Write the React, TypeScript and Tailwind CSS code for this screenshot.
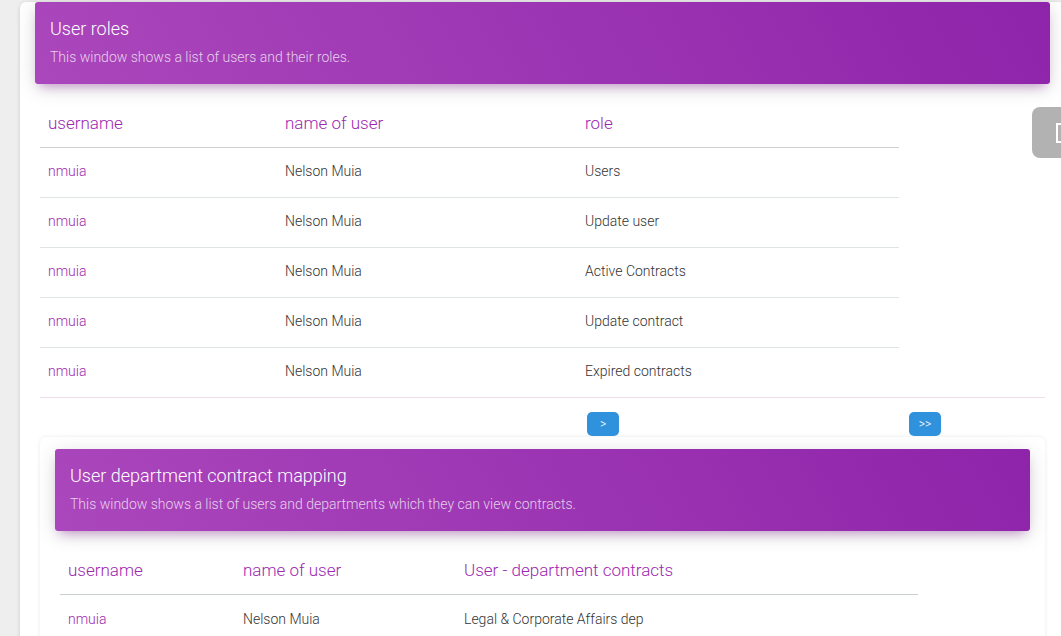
import React from "react";

const roles = ["Users", "Update user", "Active Contracts", "Update contract", "Expired contracts"];

export default function App() {
  return (
    <div className="relative h-[636px] w-[1061px] overflow-hidden bg-[#eeeeee] font-['Roboto',sans-serif] font-light">
      <div className="ml-[20px] mt-[22px] w-[1045px] rounded-[6px] bg-white shadow-[0_1px_4px_0_rgba(0,0,0,0.14)] min-h-[700px]">
        <div className="mx-[15px] -mt-[20px] rounded-[3px] bg-[linear-gradient(60deg,#ab47bc,#8e24aa)] px-[15px] pt-[14px] pb-[17px] shadow-[0_4px_20px_0_rgba(0,0,0,0.14),0_7px_10px_-5px_rgba(156,39,176,0.4)]">
          <div className="text-[18px] leading-[26px] text-white">User roles</div>
          <div className="mt-[5px] text-[14px] leading-[20px] text-white/[0.75]">This window shows a list of users and their roles.</div>
        </div>
        <div className="px-[20px] pt-[16px]">
          <table className="w-[859px] border-collapse">
            <thead>
              <tr className="h-[47px] border-b border-[#d0d0d0]">
                <th className="w-[237px] px-[8px] text-left align-middle text-[17px] font-light text-[#9c27b0]">username</th>
                <th className="w-[300px] px-[8px] text-left align-middle text-[17px] font-light text-[#9c27b0]">name of user</th>
                <th className="px-[8px] text-left align-middle text-[17px] font-light text-[#9c27b0]">role</th>
              </tr>
            </thead>
            <tbody>
              {roles.map((r, i) => (
                <tr key={r} className={i < roles.length - 1 ? "h-[50px] border-b border-[#dfe6df]" : "h-[50px]"}>
                  <td className="px-[8px] pb-[2px] align-middle text-[14px] text-[#9c27b0]">nmuia</td>
                  <td className="px-[8px] pb-[2px] align-middle text-[14px] text-[#333]">Nelson Muia</td>
                  <td className="px-[8px] pb-[2px] align-middle text-[14px] text-[#333]">{r}</td>
                </tr>
              ))}
            </tbody>
          </table>
          <div className="border-t border-[#ecdcec]" />
          <div className="mt-[14px] flex">
            <div className="w-[547px]" />
            <button className="flex h-[24px] w-[32px] items-center justify-center rounded-[5px] bg-[#3092dc] text-[12px] leading-none text-white">&gt;</button>
            <div className="w-[290px]" />
            <button className="flex h-[24px] w-[32px] items-center justify-center rounded-[5px] bg-[#3092dc] text-[12px] leading-none text-white">&gt;&gt;</button>
          </div>
          <div className="mt-[1px] w-[1005px] rounded-[6px] bg-white pt-[12px] shadow-[0_0_4px_0_rgba(0,0,0,0.08)] min-h-[300px]">
            <div className="mx-[15px] rounded-[3px] bg-[linear-gradient(60deg,#ab47bc,#8e24aa)] px-[15px] pt-[14px] pb-[17px] shadow-[0_4px_20px_0_rgba(0,0,0,0.14),0_7px_10px_-5px_rgba(156,39,176,0.4)]">
              <div className="text-[18px] leading-[26px] text-white">User department contract mapping</div>
              <div className="mt-[5px] text-[14px] leading-[20px] text-white/[0.75]">This window shows a list of users and departments which they can view contracts.</div>
            </div>
            <div className="px-[20px] pt-[16px]">
              <table className="w-[858px] border-collapse">
                <thead>
                  <tr className="h-[47px] border-b border-[#c9d0c9]">
                    <th className="w-[175px] px-[8px] text-left align-middle text-[17px] font-light text-[#9c27b0]">username</th>
                    <th className="w-[221px] px-[8px] text-left align-middle text-[17px] font-light text-[#9c27b0]">name of user</th>
                    <th className="px-[8px] text-left align-middle text-[17px] font-light text-[#9c27b0]">User - department contracts</th>
                  </tr>
                </thead>
                <tbody>
                  <tr className="h-[50px]">
                    <td className="px-[8px] align-middle text-[14px] text-[#9c27b0]">nmuia</td>
                    <td className="px-[8px] align-middle text-[14px] text-[#333]">Nelson Muia</td>
                    <td className="px-[8px] align-middle text-[14px] text-[#333]">Legal &amp; Corporate Affairs dep</td>
                  </tr>
                </tbody>
              </table>
            </div>
          </div>
        </div>
      </div>
      <div className="absolute right-0 top-[107px] h-[51px] w-[29px] rounded-l-[8px] bg-black/[0.3]">
        <div className="absolute left-[24px] top-[16px] h-[20px] w-[20px] border-2 border-white" />
      </div>
    </div>
  );
}
